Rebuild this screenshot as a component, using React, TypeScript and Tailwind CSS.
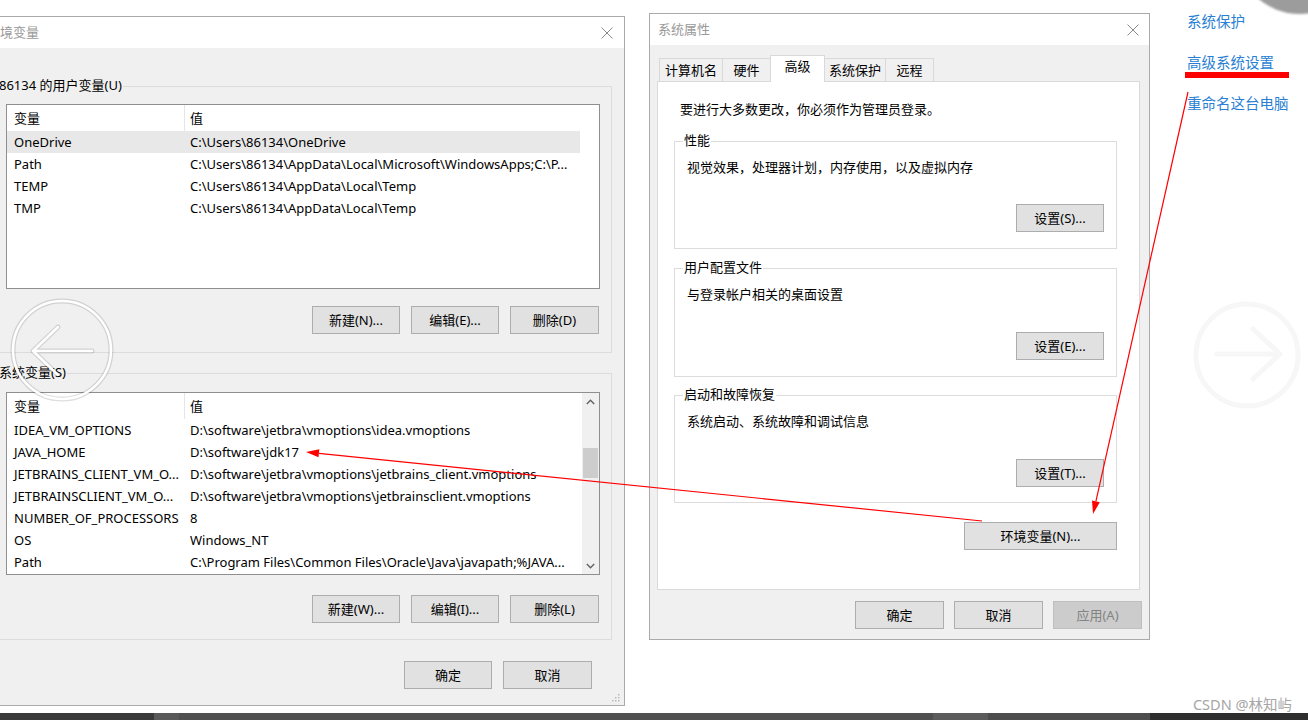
import React from "react";

const userVars = [
  ["OneDrive", "C:\\Users\\86134\\OneDrive"],
  ["Path", "C:\\Users\\86134\\AppData\\Local\\Microsoft\\WindowsApps;C:\\P..."],
  ["TEMP", "C:\\Users\\86134\\AppData\\Local\\Temp"],
  ["TMP", "C:\\Users\\86134\\AppData\\Local\\Temp"],
];

const sysVars = [
  ["IDEA_VM_OPTIONS", "D:\\software\\jetbra\\vmoptions\\idea.vmoptions"],
  ["JAVA_HOME", "D:\\software\\jdk17"],
  ["JETBRAINS_CLIENT_VM_O...", "D:\\software\\jetbra\\vmoptions\\jetbrains_client.vmoptions"],
  ["JETBRAINSCLIENT_VM_O...", "D:\\software\\jetbra\\vmoptions\\jetbrainsclient.vmoptions"],
  ["NUMBER_OF_PROCESSORS", "8"],
  ["OS", "Windows_NT"],
  ["Path", "C:\\Program Files\\Common Files\\Oracle\\Java\\javapath;%JAVA..."],
];

function Btn({ label, w = "w-[88px]", disabled = false }: { label: string; w?: string; disabled?: boolean }) {
  return (
    <div
      className={`flex h-[28px] shrink-0 items-center justify-center border text-[13px] leading-none ${w} ${
        disabled ? "border-[#bfbfbf] bg-[#cccccc] text-[#838383]" : "border-[#adadad] bg-[#e1e1e1] text-black"
      }`}
    >
      {label}
    </div>
  );
}

function GroupBox({
  label,
  className = "",
  labelBg,
  children,
}: {
  label: string;
  className?: string;
  labelBg: string;
  children?: React.ReactNode;
}) {
  return (
    <div className={`relative shrink-0 border border-[#dcdcdc] ${className}`}>
      <span className={`absolute -top-[10px] left-[8px] px-[1px] text-[13px] leading-[16px] text-black ${labelBg}`}>
        {label}
      </span>
      {children}
    </div>
  );
}

function CloseX() {
  return (
    <svg width="12" height="12" viewBox="0 0 12 12" className="shrink-0">
      <path d="M0.5 0.5 L11.5 11.5 M11.5 0.5 L0.5 11.5" stroke="#8a8a8a" strokeWidth="1" fill="none" />
    </svg>
  );
}

function VarList({ rows, scroll, height }: { rows: string[][]; scroll?: boolean; height: string }) {
  return (
    <div className={`ml-[16px] flex w-[594px] shrink-0 border border-[#8f8f8f] bg-white ${height}`}>
      <div className="flex w-[573px] flex-col">
        <div className="flex h-[26px] items-center text-[13px] leading-[17px] text-black">
          <div className="flex h-full w-[178px] items-center border-r border-[#e5e5e5] pl-[7px]">变量</div>
          <div className="pl-[5px]">值</div>
        </div>
        {rows.map(([k, v], i) => (
          <div
            key={k + i}
            className={`flex h-[22px] items-center text-[13px] leading-[17px] text-black ${
              !scroll && i === 0 ? "bg-[#e8e8e8]" : ""
            }`}
          >
            <div className="w-[178px] overflow-hidden whitespace-nowrap pl-[7px]">{k}</div>
            <div className="whitespace-nowrap pl-[5px]">{v}</div>
          </div>
        ))}
      </div>
      {scroll && (
        <div className="ml-auto flex w-[17px] flex-col bg-[#f0f0f0]">
          <div className="flex h-[17px] items-center justify-center">
            <svg width="9" height="6" viewBox="0 0 9 6">
              <polyline points="0.8,5 4.5,1.2 8.2,5" fill="none" stroke="#606060" strokeWidth="1.3" />
            </svg>
          </div>
          <div className="mx-[1px] mt-[38px] h-[30px] bg-[#cdcdcd]" />
          <div className="mt-auto flex h-[17px] items-center justify-center">
            <svg width="9" height="6" viewBox="0 0 9 6">
              <polyline points="0.8,1 4.5,4.8 8.2,1" fill="none" stroke="#606060" strokeWidth="1.3" />
            </svg>
          </div>
        </div>
      )}
    </div>
  );
}

function EnvDialog() {
  return (
    <div className="ml-[-24px] mt-[16px] flex h-[690px] w-[649px] shrink-0 flex-col border border-[#aaaaaa] bg-[#f0f0f0]">
      <div className="flex h-[31px] shrink-0 items-center justify-between bg-white pl-[10px] pr-[11px]">
        <span className="text-[13px] leading-[17px] text-[#999999]">环境变量</span>
        <CloseX />
      </div>
      <GroupBox label="86134 的用户变量(U)" labelBg="bg-[#f0f0f0]" className="ml-[12px] mt-[38px] h-[267px] w-[623px]">
        <div className="flex h-full flex-col">
          <div className="h-[17px] shrink-0" />
          <VarList rows={userVars} height="h-[185px]" />
          <div className="ml-[16px] mt-[17px] flex w-[594px] justify-end gap-[11px] pr-[1px]">
            <Btn label="新建(N)..." />
            <Btn label="编辑(E)..." />
            <Btn label="删除(D)" w="w-[89px]" />
          </div>
        </div>
      </GroupBox>
      <GroupBox label="系统变量(S)" labelBg="bg-[#f0f0f0]" className="ml-[12px] mt-[20px] h-[267px] w-[623px]">
        <div className="flex h-full flex-col">
          <div className="h-[18px] shrink-0" />
          <VarList rows={sysVars} scroll height="h-[183px]" />
          <div className="ml-[16px] mt-[20px] flex w-[594px] justify-end gap-[11px] pr-[1px]">
            <Btn label="新建(W)..." />
            <Btn label="编辑(I)..." />
            <Btn label="删除(L)" w="w-[89px]" />
          </div>
        </div>
      </GroupBox>
      <div className="mt-[21px] flex justify-end gap-[11px] pr-[32px]">
        <Btn label="确定" />
        <Btn label="取消" w="w-[89px]" />
      </div>
      <div className="mt-auto flex justify-end pb-[3px] pr-[4px]">
        <svg width="8" height="8" viewBox="0 0 8 8">
          <g fill="#b5b5b5">
            <rect x="6" y="0" width="1.4" height="1.4" />
            <rect x="3" y="3" width="1.4" height="1.4" />
            <rect x="6" y="3" width="1.4" height="1.4" />
            <rect x="0" y="6" width="1.4" height="1.4" />
            <rect x="3" y="6" width="1.4" height="1.4" />
            <rect x="6" y="6" width="1.4" height="1.4" />
          </g>
        </svg>
      </div>
    </div>
  );
}

function Tab({ label, w, selected = false, first = false }: { label: string; w: string; selected?: boolean; first?: boolean }) {
  return (
    <div
      className={`flex items-center justify-center border-l border-r border-t border-[#d9d9d9] text-[13px] leading-[17px] text-black ${w} ${
        first ? "" : "-ml-[1px]"
      } ${selected ? "relative z-10 -mb-[1px] h-[27px] bg-white pb-[5px]" : "h-[23px] bg-[#f0f0f0]"}`}
    >
      {label}
    </div>
  );
}

function SettingBox({ label, text, btn, mt, h, textMt, btnMt }: { label: string; text: string; btn: string; mt: string; h: string; textMt: string; btnMt: string }) {
  return (
    <GroupBox label={label} labelBg="bg-white" className={`ml-[16px] w-[443px] ${mt} ${h}`}>
      <div className={`ml-[12px] text-[13px] leading-[17px] text-black ${textMt}`}>{text}</div>
      <div className={`flex justify-end pr-[12px] ${btnMt}`}>
        <Btn label={btn} />
      </div>
    </GroupBox>
  );
}

function SysDialog() {
  return (
    <div className="ml-[24px] mt-[13px] flex h-[627px] w-[501px] shrink-0 flex-col border border-[#aaaaaa] bg-[#f0f0f0]">
      <div className="flex h-[31px] shrink-0 items-center justify-between bg-white pl-[8px] pr-[10px]">
        <span className="text-[13px] leading-[17px] text-[#999999]">系统属性</span>
        <CloseX />
      </div>
      <div className="flex flex-1 flex-col px-[7px]">
        <div className="mt-[10px] flex h-[26px] items-end pl-[2px]">
          <Tab label="计算机名" w="w-[64px]" first />
          <Tab label="硬件" w="w-[49px]" />
          <Tab label="高级" w="w-[55px]" selected />
          <Tab label="系统保护" w="w-[62px]" />
          <Tab label="远程" w="w-[49px]" />
        </div>
        <div className="flex h-[509px] w-[483px] flex-col border border-[#d9d9d9] bg-white">
          <div className="ml-[22px] mt-[19px] text-[13px] leading-[17px] text-black">
            要进行大多数更改，你必须作为管理员登录。
          </div>
          <SettingBox label="性能" text="视觉效果，处理器计划，内存使用，以及虚拟内存" btn="设置(S)..." mt="mt-[23px]" h="h-[108px]" textMt="mt-[17px]" btnMt="mt-[28px]" />
          <SettingBox label="用户配置文件" text="与登录帐户相关的桌面设置" btn="设置(E)..." mt="mt-[19px]" h="h-[109px]" textMt="mt-[17px]" btnMt="mt-[29px]" />
          <SettingBox label="启动和故障恢复" text="系统启动、系统故障和调试信息" btn="设置(T)..." mt="mt-[18px]" h="h-[108px]" textMt="mt-[17px]" btnMt="mt-[29px]" />
          <div className="mt-[19px] flex justify-end pr-[22px]">
            <Btn label="环境变量(N)..." w="w-[153px]" />
          </div>
        </div>
        <div className="mt-[11px] flex justify-end gap-[10px]">
          <Btn label="确定" w="w-[89px]" />
          <Btn label="取消" w="w-[89px]" />
          <Btn label="应用(A)" w="w-[89px]" disabled />
        </div>
      </div>
    </div>
  );
}

function Links() {
  return (
    <div className="ml-[37px] flex flex-1 flex-col self-stretch text-[14.5px] leading-[20px] text-[#2a7fd4]">
      <div className="mt-[11px]">系统保护</div>
      <div className="mt-[21px]">高级系统设置</div>
      <div className="-ml-[2px] h-[6px] w-[104px] bg-[#ff0000]" />
      <div className="mt-[15px]">重命名这台电脑</div>
      <div className="mr-[16px] mt-auto self-end text-[14.5px] leading-[18px] text-[#a6a6a6]">CSDN @林知屿</div>
    </div>
  );
}

function Taskbar() {
  return (
    <div className="flex h-[7px] w-full">
      <div className="w-[154px] bg-[#3a3a3a]" />
      <div className="w-[25px] bg-[#5a5a5a]" />
      <div className="w-[754px] bg-[#505050]" />
      <div className="w-[55px] bg-[#5c5c5c]" />
      <div className="w-[162px] bg-[#4d4d4d]" />
      <div className="flex-1 bg-[#2e2e2e]" />
    </div>
  );
}

export default function App() {
  return (
    <div className="relative h-[720px] w-[1308px] overflow-hidden bg-white font-['Noto_Sans','Noto_Sans_CJK_SC',sans-serif]">
      <div className="flex h-[713px] items-start">
        <EnvDialog />
        <SysDialog />
        <Links />
      </div>
      <Taskbar />

      {/* top-right gray blob */}
      <div className="pointer-events-none absolute left-[1236px] top-[-114px] h-[128px] w-[128px] rounded-full bg-[#9c9c9c] blur-[1px]" />

      {/* overlays: nav circles and red annotation arrows */}
      <svg className="pointer-events-none absolute left-0 top-0" width="1308" height="720" viewBox="0 0 1308 720">
        <g fill="none" strokeLinecap="round" strokeLinejoin="round">
          <circle cx="62" cy="350" r="49" stroke="rgba(0,0,0,0.13)" strokeWidth="5" />
          <circle cx="62" cy="350" r="49" stroke="#ffffff" strokeWidth="2.5" />
          <path d="M33 351 H92 M33 351 L58 327 M33 351 L58 375" stroke="rgba(0,0,0,0.13)" strokeWidth="5" />
          <path d="M33 351 H92 M33 351 L58 327 M33 351 L58 375" stroke="#ffffff" strokeWidth="2.5" />

          <circle cx="1247" cy="355" r="51" stroke="rgba(0,0,0,0.035)" strokeWidth="5" />
          <circle cx="1247" cy="355" r="51" stroke="#f7f7f7" strokeWidth="2.5" />
          <path d="M1217 354 H1280 M1280 354 L1253 329 M1280 354 L1253 379" stroke="rgba(0,0,0,0.035)" strokeWidth="5" />
          <path d="M1217 354 H1280 M1280 354 L1253 329 M1280 354 L1253 379" stroke="#f7f7f7" strokeWidth="2.5" />
        </g>
        <g stroke="#ff0000" strokeWidth="1.2" fill="#ff0000">
          <line x1="1188" y1="92" x2="1095.9" y2="501.3" />
          <polygon points="1093,514 1099.8,502.2 1092,500.4" stroke="none" />
          <line x1="982" y1="521" x2="318.9" y2="453.3" />
          <polygon points="306,452 319.3,449.3 318.5,457.3" stroke="none" />
        </g>
      </svg>
    </div>
  );
}
